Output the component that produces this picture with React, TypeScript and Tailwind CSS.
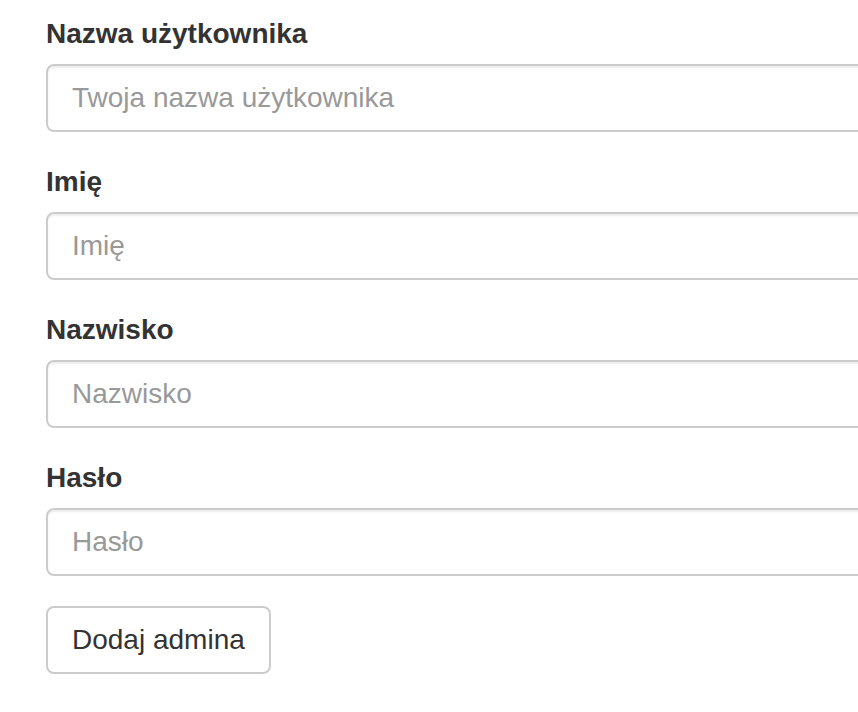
export default function App() {
  const fields = [
    { label: "Nazwa użytkownika", placeholder: "Twoja nazwa użytkownika", type: "text" },
    { label: "Imię", placeholder: "Imię", type: "text" },
    { label: "Nazwisko", placeholder: "Nazwisko", type: "text" },
    { label: "Hasło", placeholder: "Hasło", type: "password" },
  ];
  return (
    <div className="w-[858px] h-[712px] overflow-hidden bg-white font-['Liberation_Sans',Arial,sans-serif] text-[#333]">
      <form className="pl-[46px] pt-[14px] w-[960px]" onSubmit={(e) => e.preventDefault()}>
        {fields.map((f) => (
          <div key={f.label} className="mb-[30px]">
            <label className="block mb-[10px] text-[28px] leading-[40px] font-bold">{f.label}</label>
            <input
              type={f.type}
              placeholder={f.placeholder}
              className="block w-full h-[68px] px-[24px] text-[28px] text-[#555] bg-white border-2 border-[#ccc] rounded-[8px] shadow-[inset_0_2px_2px_rgba(0,0,0,0.075)] outline-none placeholder:text-[#999]"
            />
          </div>
        ))}
        <button
          type="submit"
          className="h-[68px] px-[24px] text-[28px] leading-[40px] text-[#333] bg-white border-2 border-[#ccc] rounded-[8px]"
        >
          Dodaj admina
        </button>
      </form>
    </div>
  );
}
